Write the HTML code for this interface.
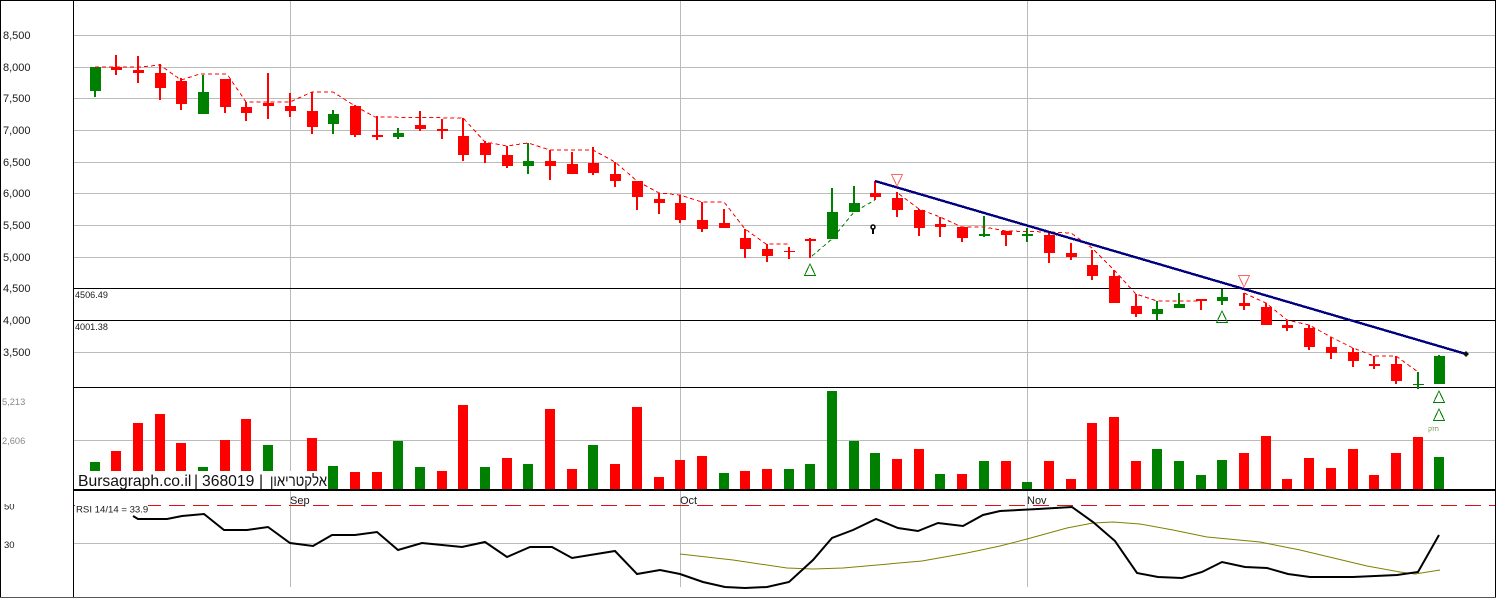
<!DOCTYPE html>
<html lang="en">
<head>
<meta charset="utf-8">
<title>Bursagraph chart</title>
<style>
html,body{margin:0;padding:0;background:#fff;width:1496px;height:598px;overflow:hidden}
svg{display:block}
text{font-family:"Liberation Sans","DejaVu Sans",sans-serif;fill:#1a1a1a}
.ax{font-size:11px}
.vl{font-size:9.3px;fill:#888}
.sm{font-size:9.1px}
</style>
</head>
<body>
<svg width="1496" height="598" viewBox="0 0 1496 598" xmlns="http://www.w3.org/2000/svg">
<rect width="1496" height="598" fill="#fff"/>

<!-- vertical grid -->
<path shape-rendering="crispEdges" fill="#bbb" d="M290 1h1V587h-1zM680 1h1V587h-1zM1027 1h1V587h-1z"/>
<!-- horizontal grid -->
<path shape-rendering="crispEdges" fill="#bbb" d="M73 35h1423v1H73zM73 67h1423v1H73zM73 98h1423v1H73zM73 130h1423v1H73zM73 162h1423v1H73zM73 193h1423v1H73zM73 225h1423v1H73zM73 257h1423v1H73zM73 352h1423v1H73zM73 440h1423v1H73zM73 543h1423v1H73z"/>
<!-- black levels -->
<path shape-rendering="crispEdges" fill="#000" d="M73 288h1423v1H73zM73 320h1423v1H73zM73 387h1423v1H73zM73 489h1423v2H73z"/>

<!-- watermark background -->
<rect x="75" y="471" width="253" height="18" fill="#fff"/>

<!-- volume: red -->
<path shape-rendering="crispEdges" fill="#f00" d="M111 451h10V471h-10zM133 423h10V471h-10zM155 414h10V471h-10zM176 443h10V471h-10zM220 440h10V471h-10zM241 419h10V471h-10zM307 438h10V471h-10zM350 472h10V489h-10zM372 472h10V489h-10zM437 471h10V489h-10zM458 405h10V489h-10zM502 458h10V489h-10zM545 409h10V489h-10zM567 469h10V489h-10zM610 464h10V489h-10zM632 407h10V489h-10zM654 477h10V489h-10zM675 460h10V489h-10zM697 456h10V489h-10zM740 471h10V489h-10zM762 469h10V489h-10zM892 459h10V489h-10zM914 449h10V489h-10zM957 474h10V489h-10zM1001 461h10V489h-10zM1044 461h10V489h-10zM1066 479h10V489h-10zM1087 423h10V489h-10zM1109 417h10V489h-10zM1131 461h10V489h-10zM1239 453h10V489h-10zM1261 436h10V489h-10zM1282 479h10V489h-10zM1304 458h10V489h-10zM1326 468h10V489h-10zM1348 449h10V489h-10zM1369 475h10V489h-10zM1391 453h10V489h-10zM1413 437h10V489h-10z"/>
<!-- volume: green -->
<path shape-rendering="crispEdges" fill="#008000" d="M90 462h10V471H90zM198 467h10V471h-10zM263 445h10V471h-10zM328 466h10V489h-10zM393 441h10V489h-10zM415 467h10V489h-10zM480 467h10V489h-10zM523 464h10V489h-10zM588 445h10V489h-10zM719 473h10V489h-10zM784 469h10V489h-10zM805 464h10V489h-10zM827 391h10V489h-10zM849 441h10V489h-10zM870 453h10V489h-10zM935 474h10V489h-10zM979 461h10V489h-10zM1022 482h10V489h-10zM1152 449h10V489h-10zM1174 461h10V489h-10zM1196 475h10V489h-10zM1217 460h10V489h-10zM1434 457h10V489h-10z"/>

<!-- watermark -->
<g font-size="15.7">
<text x="78" y="486" style="fill:#111">Bursagraph.co.il</text>
<text x="194" y="486" style="fill:#111">|</text>
<text x="202" y="486" style="fill:#111">368019</text>
<text x="259" y="486" style="fill:#111">|</text>
<text x="270" y="486" textLength="57" lengthAdjust="spacingAndGlyphs" style="fill:#111">אלקטריאון</text>
</g>

<!-- candles: red -->
<path shape-rendering="crispEdges" fill="#f00" d="
M111 67h11V70h-11zM115 55h2V75h-2z
M133 70h11V73h-11zM137 56h2V83h-2z
M155 73h11V88h-11zM159 64h2V100h-2z
M176 81h11V104h-11zM180 78h2V110h-2z
M220 79h11V107h-11zM224 79h2V113h-2z
M241 107h11V113h-11zM245 102h2V121h-2z
M263 103h11V106h-11zM267 73h2V119h-2z
M285 106h11V111h-11zM289 93h2V117h-2z
M307 111h11V127h-11zM311 92h2V134h-2z
M350 106h11V135h-11zM354 105h2V137h-2z
M372 135h11V137h-11zM376 116h2V140h-2z
M415 125h11V129h-11zM419 111h2V131h-2z
M437 129h11V131h-11zM441 119h2V139h-2z
M458 136h11V155h-11zM462 118h2V161h-2z
M480 143h11V155h-11zM484 141h2V163h-2z
M502 155h11V166h-11zM506 146h2V168h-2z
M545 161h11V166h-11zM549 150h2V180h-2z
M567 164h11V174h-11zM571 152h2V174h-2z
M588 163h11V173h-11zM592 147h2V175h-2z
M610 174h11V181h-11zM614 162h2V187h-2z
M632 181h11V197h-11zM636 181h2V210h-2z
M654 199h11V203h-11zM658 193h2V214h-2z
M675 203h11V220h-11zM679 195h2V223h-2z
M697 220h11V229h-11zM701 202h2V232h-2z
M719 223h11V228h-11zM723 209h2V228h-2z
M740 238h11V249h-11zM744 229h2V258h-2z
M762 249h11V256h-11zM766 244h2V262h-2z
M784 251h11V252h-11zM788 247h2V259h-2z
M805 239h11V241h-11zM809 238h2V258h-2z
M870 193h11V197h-11zM874 181h2V200h-2z
M892 198h11V210h-11zM896 192h2V217h-2z
M914 210h11V228h-11zM918 209h2V236h-2z
M935 224h11V227h-11zM939 217h2V237h-2z
M957 227h11V238h-11zM961 227h2V242h-2z
M1001 231h11V235h-11zM1005 231h2V246h-2z
M1044 235h11V253h-11zM1048 233h2V263h-2z
M1066 253h11V257h-11zM1070 243h2V260h-2z
M1087 265h11V276h-11zM1091 250h2V280h-2z
M1109 276h11V303h-11zM1113 270h2V303h-2z
M1131 306h11V314h-11zM1135 294h2V317h-2z
M1196 299h11V301h-11zM1200 299h2V310h-2z
M1239 303h11V306h-11zM1243 293h2V310h-2z
M1261 307h11V325h-11zM1265 303h2V325h-2z
M1282 325h11V328h-11zM1286 320h2V331h-2z
M1304 328h11V347h-11zM1308 325h2V350h-2z
M1326 347h11V353h-11zM1330 337h2V359h-2z
M1348 352h11V361h-11zM1352 348h2V367h-2z
M1369 364h11V366h-11zM1373 356h2V369h-2z
M1391 364h11V381h-11zM1395 356h2V384h-2z"/>
<!-- candles: green -->
<path shape-rendering="crispEdges" fill="#008000" d="
M90 67h11V91H90zM94 67h2V97h-2z
M198 92h11V114h-11zM202 75h2V92h-2z
M328 114h11V124h-11zM332 110h2V134h-2z
M393 133h11V137h-11zM397 128h2V139h-2z
M523 161h11V166h-11zM527 143h2V174h-2z
M827 212h11V239h-11zM831 188h2V212h-2z
M849 203h11V212h-11zM853 186h2V212h-2z
M979 234h11V236h-11zM983 216h2V237h-2z
M1022 234h11V236h-11zM1026 228h2V242h-2z
M1152 309h11V314h-11zM1156 301h2V320h-2z
M1174 304h11V308h-11zM1178 293h2V308h-2z
M1217 297h11V301h-11zM1221 289h2V305h-2z
M1413 384h11V385h-11zM1417 372h2V389h-2z
M1434 356h11V384h-11zM1438 355h2V384h-2z"/>

<!-- dashed trend lines -->
<g fill="none" stroke-width="1" stroke-dasharray="4 3" shape-rendering="crispEdges">
<polyline stroke="#f00" points="95,67 140,67 160,65 181,80 200,74 227,74 246,102 290,102 312,92 333,92 355,106 375,117 463,118 485,142 507,146 528,143 550,150 593,150 615,162 637,181 659,193 680,195 702,202 724,202 745,229 766,244 790,244"/>
<polyline stroke="#008000" points="812,256 832,239 854,212 875,200"/>
<polyline stroke="#f00" points="899,194 919,209 940,217 962,227 984,227 1006,231 1049,232 1071,233 1092,248 1114,270 1136,294 1157,301 1201,301"/>
<polyline stroke="#f00" points="1244,293 1266,303 1287,320 1309,325 1331,337 1353,348 1374,356 1396,356 1418,372"/>
</g>

<!-- blue trendline -->
<line x1="875" y1="181" x2="1466" y2="354" stroke="#000080" stroke-width="2.4" shape-rendering="crispEdges"/>
<path d="M1466 351l3 3l-3 3l-3-3z" fill="#111"/>

<!-- triangle markers -->
<g fill="none" stroke="#008000" stroke-width="1" shape-rendering="crispEdges">
<path d="M810 264L804.5 275.5H815.5z"/>
<path d="M1222 311L1216.5 322.5H1227.5z"/>
<path d="M1439 391L1433.5 402.5H1444.5z"/>
<path d="M1439 409L1433.5 420.5H1444.5z"/>
</g>
<g fill="none" stroke="#f66" stroke-width="1" shape-rendering="crispEdges">
<path d="M891.5 174.5H902.5L897 186z"/>
<path d="M1238.5 275.5H1249.5L1244 287z"/>
</g>
<!-- small marker -->
<circle cx="873" cy="227" r="2" fill="#fff" stroke="#000" stroke-width="1.5"/>
<rect x="872" y="229" width="2" height="5" fill="#000"/>
<text x="1428" y="431" font-size="7" style="fill:#7a9a5a">חזק</text>

<!-- price labels -->
<text class="ax" x="3" y="39">8,500</text>
<text class="ax" x="3" y="71">8,000</text>
<text class="ax" x="3" y="102">7,500</text>
<text class="ax" x="3" y="134">7,000</text>
<text class="ax" x="3" y="166">6,500</text>
<text class="ax" x="3" y="197">6,000</text>
<text class="ax" x="3" y="229">5,500</text>
<text class="ax" x="3" y="261">5,000</text>
<text class="ax" x="3" y="292">4,500</text>
<text class="ax" x="3" y="324">4,000</text>
<text class="ax" x="3" y="356">3,500</text>
<text class="vl" x="2" y="405">5,213</text>
<text class="vl" x="2" y="444">2,606</text>
<text class="sm" x="75" y="298">4506.49</text>
<text class="sm" x="75" y="330">4001.38</text>

<!-- RSI panel -->
<line x1="73" y1="505.5" x2="1496" y2="505.5" stroke="#e01010" stroke-width="1" stroke-dasharray="16 8" shape-rendering="crispEdges"/>
<rect x="75" y="504" width="73" height="13" fill="#fff"/>
<text class="sm" x="76" y="512.5" style="font-size:9.6px">RSI 14/14 = 33.9</text>
<text x="290" y="504" font-size="11">Sep</text>
<text x="680" y="504" font-size="11">Oct</text>
<text x="1027" y="504" font-size="11">Nov</text>
<text x="4" y="548" font-size="9.5">30</text>
<svg x="0" y="504" width="30" height="10" viewBox="0 504 30 10"><text x="4" y="509.5" font-size="9.5">50</text></svg>

<polyline fill="none" stroke="#808000" stroke-width="1" points="680,554 733,560 787,568 813,569 843,568 922,561 967,553 1000,546 1027,539 1067,528 1093,523 1113,522 1140,524 1173,530 1207,537 1260,542 1300,550 1367,566 1400,572 1415,574 1440,570"/>
<polyline fill="none" stroke="#000" stroke-width="2" points="133,516 138,519 167,519 182,516 204,514 224,530 247,530 268,527 290,543 313,546 332,535 355,535 377,532 398,550 422,543 462,547 485,542 507,557 530,547 552,547 572,558 615,551 637,574 660,570 680,574 703,582 725,587 745,588 767,587 789,582 813,560 832,538 853,530 876,519 898,528 918,531 938,523 963,526 983,515 1000,511 1038,509 1072,507 1093,522 1115,541 1137,573 1158,577 1182,578 1202,572 1222,562 1245,567 1267,568 1288,574 1310,577 1353,577 1397,575 1418,572 1439,535"/>

<!-- frame -->
<path shape-rendering="crispEdges" fill="#000" d="M0 0h1496v1H0zM0 0h1V598H0zM73 0h1V597H73zM1495 0h1V598h-1z"/>
<rect x="0" y="597" width="1496" height="1" fill="#555" shape-rendering="crispEdges"/>
</svg>
</body>
</html>
